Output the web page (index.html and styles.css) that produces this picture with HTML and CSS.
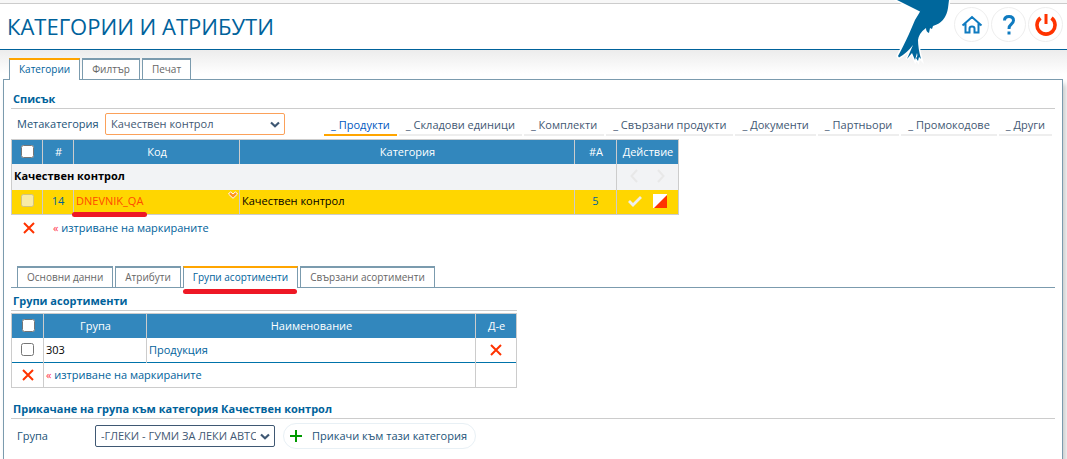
FILE: index.html
```html
<!DOCTYPE html>
<html lang="bg">
<head>
<meta charset="utf-8">
<title>Категории и атрибути</title>
<link rel="stylesheet" href="styles.css">
</head>
<body>
<svg class="defs" aria-hidden="true">
  <symbol id="cross" viewBox="0 0 12 12"><path d="M1 1L11 11M11 1L1 11" fill="none" stroke="#ff3300" stroke-width="2"/></symbol>
  <symbol id="chevron" viewBox="0 0 10 7"><path d="M1 1.5L5 5.2L9 1.5" fill="none" stroke="#3f5873" stroke-width="2.2"/></symbol>
</svg>
<header class="header">
  <h1 class="page-title">КАТЕГОРИИ И АТРИБУТИ</h1>
  <svg class="bird" viewBox="0 0 56 62" aria-hidden="true">
    <path d="M-6 -4L2 0L25 11.500L28 6Q25 12 20 20Q17 27 14 34Q8 47 3 56L4 57.500Q12 53 18 45L12 59L17 53L20 60L22 53Q23 57 21 58L23 61L24 57L26 59Q23 48 23 40Q24 33 31 28Q31 32 34 33L35 28L37 29L38 26Q51 22 53 8L54 0V-4Z" fill="#00679c" stroke="#fff" stroke-width="3" paint-order="stroke"/>
  </svg>
  <nav class="header-actions">
    <a class="round" href="#" aria-label="Начало"><svg width="22" height="22" viewBox="0 0 22 22"><path d="M1.500 11.500L11 3L20.500 11.500M4.500 9.500V18.500H8.500V14.500Q8.500 12.500 11 12.500Q13.500 12.500 13.500 14.500V18.500H17.500V9.500" fill="none" stroke="#0f7bc0" stroke-width="2"/></svg></a>
    <a class="round" href="#" aria-label="Помощ"><svg width="22" height="22" viewBox="0 0 22 22"><path d="M6.500 6.500Q6.500 2.500 11 2.500Q15.500 2.500 15.500 6.500Q15.500 8.500 13 10.500Q11 12 11 15" fill="none" stroke="#0f7bc0" stroke-width="3"/><path d="M9.500 17.500H12.500V20.500H9.500Z" fill="#0f7bc0"/></svg></a>
    <a class="round" href="#" aria-label="Изход"><svg width="22" height="22" viewBox="0 0 22 22"><path d="M5.500 4A9 9 0 1 0 16.500 4" fill="none" stroke="#ff3300" stroke-width="3.600"/><path d="M11 0V10" stroke="#ff3300" stroke-width="3"/></svg></a>
  </nav>
</header>
<main class="page">
  <nav class="tabs">
    <a class="tab active" href="#">Категории</a>
    <a class="tab" href="#">Филтър</a>
    <a class="tab" href="#">Печат</a>
  </nav>
  <div class="panel">
    <h2 class="section-title">Списък</h2>
    <div class="filter">
      <label class="filter-label" for="meta">Метакатегория</label>
      <span class="select-wrap">
        <select class="select highlighted" id="meta"><option>Качествен контрол</option></select>
        <svg class="arrow"><use href="#chevron"/></svg>
      </span>
      <nav class="kinds">
        <a class="kind active" href="#">_ Продукти</a>
        <a class="kind" href="#">_ Складови единици</a>
        <a class="kind" href="#">_ Комплекти</a>
        <a class="kind" href="#">_ Свързани продукти</a>
        <a class="kind" href="#">_ Документи</a>
        <a class="kind" href="#">_ Партньори</a>
        <a class="kind" href="#">_ Промокодове</a>
        <a class="kind" href="#">_ Други</a>
      </nav>
    </div>
    <table class="grid categories">
      <colgroup><col class="c-check"><col class="c-num"><col class="c-code"><col class="c-cat"><col class="c-attr"><col class="c-act"></colgroup>
      <thead>
        <tr><th><input class="check" type="checkbox" aria-label="Маркирай всички категории"></th><th>#</th><th>Код</th><th>Категория</th><th>#А</th><th>Действие</th></tr>
      </thead>
      <tbody>
        <tr class="group">
          <td colspan="5">Качествен контрол</td>
          <td class="center"><span class="icons">
            <svg width="8" height="14" viewBox="0 0 8 14"><path d="M7 1L1.500 7L7 13" fill="none" stroke="#e8e8e8" stroke-width="2"/></svg>
            <svg width="8" height="14" viewBox="0 0 8 14"><path d="M1 1L6.500 7L1 13" fill="none" stroke="#e8e8e8" stroke-width="2"/></svg>
          </span></td>
        </tr>
        <tr class="selected">
          <td class="center"><input class="check" type="checkbox" disabled aria-label="Маркирай DNEVNIK_QA"></td>
          <td class="center num">14</td>
          <td class="code"><a class="code-link marked" href="#">DNEVNIK_QA</a><svg class="sort-mark" width="10" height="8" viewBox="0 0 10 8"><path d="M0.500 3L2.500 0.800L5 3L7.500 0.800L9.500 3L5 7.300Z" fill="#ff9320" stroke="#fff"/></svg></td>
          <td>Качествен контрол</td>
          <td class="center num">5</td>
          <td class="center"><span class="icons tight">
            <svg width="14" height="12" viewBox="0 0 14 12"><path d="M1 6L5 10L13 2" fill="none" stroke="#eee" stroke-width="2.800"/></svg>
            <svg width="14" height="14" viewBox="0 0 14 14"><path d="M0 0H14V14H0Z" fill="#fff"/><path d="M14 1V14H1Z" fill="#ff3300"/></svg>
          </span></td>
        </tr>
      </tbody>
    </table>
    <div class="delete-row">
      <svg class="cross"><use href="#cross"/></svg>
      <a class="link" href="#"><span class="red">«</span> изтриване на маркираните</a>
    </div>
    <nav class="tabs inner">
      <a class="tab" href="#">Основни данни</a>
      <a class="tab" href="#">Атрибути</a>
      <a class="tab active marked" href="#">Групи асортименти</a>
      <a class="tab" href="#">Свързани асортименти</a>
    </nav>
    <section class="groups">
      <h2 class="section-title">Групи асортименти</h2>
      <table class="grid assortments">
        <colgroup><col class="g-check"><col class="g-group"><col class="g-name"><col class="g-act"></colgroup>
        <thead>
          <tr><th><input class="check" type="checkbox" aria-label="Маркирай всички групи"></th><th>Група</th><th>Наименование</th><th>Д-е</th></tr>
        </thead>
        <tbody>
          <tr class="item">
            <td class="center"><input class="check" type="checkbox" aria-label="Маркирай 303"></td>
            <td>303</td>
            <td><a class="link" href="#">Продукция</a></td>
            <td class="center"><svg class="cross"><use href="#cross"/></svg></td>
          </tr>
          <tr class="item">
            <td class="center"><svg class="cross"><use href="#cross"/></svg></td>
            <td colspan="2"><a class="link" href="#"><span class="red">«</span> изтриване на маркираните</a></td>
            <td></td>
          </tr>
        </tbody>
      </table>
    </section>
    <h2 class="section-title attach-title">Прикачане на група към категория Качествен контрол</h2>
    <div class="attach">
      <label class="attach-label" for="group">Група</label>
      <span class="select-wrap">
        <select class="select" id="group"><option>-ГЛЕКИ - ГУМИ ЗА ЛЕКИ АВТОМОБИЛИ</option></select>
        <svg class="arrow"><use href="#chevron"/></svg>
      </span>
      <button class="attach-button" type="button"><svg width="12" height="12" viewBox="0 0 12 12"><path d="M6 0V12M0 6H12" stroke="#009a00" stroke-width="2"/></svg>Прикачи към тази категория</button>
    </div>
  </div>
</main>
</body>
</html>
```
FILE: styles.css
```css
* { box-sizing: border-box; }
body {
  margin: 0;
  min-height: 100vh;
  display: flex;
  flex-direction: column;
  padding-top: 3px;
  font: 11px/16px "Open Sans", sans-serif;
  color: #000;
  background: #f7f7f7;
}
a { text-decoration: none; color: #005f94; }
.defs { position: absolute; width: 0; height: 0; }

.header {
  position: relative;
  display: flex;
  align-items: center;
  justify-content: space-between;
  height: 47px;
  padding: 0 4px 0 7px;
  border-top: 1px solid #ccc;
  border-bottom: 1px solid #00629b;
  background: #fff;
}
.page-title { margin: 0; font-size: 22px; line-height: 28px; padding-bottom: 2px; font-weight: 400; color: #00629b; }
.bird { position: absolute; top: -4px; right: 116px; width: 56px; height: 62px; z-index: 1; overflow: visible; }
.header-actions { display: flex; align-self: flex-start; gap: 2px; margin-top: 3px; }
.round {
  display: grid;
  place-items: center;
  width: 35px;
  height: 35px;
  border: 1px solid #eee;
  border-radius: 50%;
}

.page {
  flex: 1;
  display: flex;
  flex-direction: column;
  padding: 8px 4px 0 3px;
  background: linear-gradient(#ececec, #fff 24px);
}
.tabs { display: flex; gap: 2px; padding-left: 6px; }
.tab {
  position: relative;
  height: 21px;
  padding: 1px 9px 0;
  border: 1px solid #7b9bae;
  border-top-width: 2px;
  border-bottom: 0;
  background: #fff;
  color: #666;
  font-size: 10px;
}
.tab.active { border-top-color: #ffa500; color: #00629b; margin-bottom: -1px; height: 22px; z-index: 1; }
.panel {
  flex: 1;
  padding: 10px 7px 8px;
  border: 1px solid #7b9bae;
  border-bottom: 0;
  background: #fff;
  box-shadow: 3px 5px 5px #ccc;
}
.section-title {
  margin: 0;
  height: 19px;
  padding-left: 2px;
  border-bottom: 1px solid #ccc;
  font-size: 11px;
  line-height: 18px;
  font-weight: 700;
  color: #00629b;
}

.filter { display: flex; align-items: flex-start; height: 30px; padding-top: 4px; }
.filter-label { width: 94px; padding-left: 6px; line-height: 22px; color: #225378; }
.select-wrap { position: relative; display: block; width: 180px; }
.select {
  display: block;
  appearance: none;
  width: 100%;
  height: 22px;
  padding: 0 18px 0 5px;
  border: 1px solid #3f5873;
  border-radius: 2px;
  background: #fff;
  font: inherit;
  color: #3f5873;
}
.select.highlighted { border-color: #fba15a; }
.arrow { position: absolute; right: 5px; top: 8px; width: 10px; height: 7px; pointer-events: none; }
.kinds { flex: 1; display: flex; justify-content: flex-end; gap: 2px; padding-right: 3px; white-space: nowrap; }
.kind { height: 23px; padding: 0 7px; border-bottom: 2px solid #eee; line-height: 24px; color: #3f5873; }
.kind.active { border-color: #ffa500; color: #0058c0; }

.grid { border-collapse: collapse; table-layout: fixed; border: 1px solid #ccc; }
.grid th { height: 24px; padding: 0 0 0 1px; border: 1px solid #ccc; border-bottom: 0; background: #3287bd; color: #fff; font-weight: 500; }
.grid td { height: 25px; padding: 0 2px; border-left: 1px solid #ccc; border-right: 1px solid #ccc; }
.grid .center { text-align: center; padding: 0; }
.check { display: block; margin: 0 auto; width: 13px; height: 13px; }
.categories { width: 668px; }
.categories td, .categories .center { padding-bottom: 2px; }
.c-check { width: 31px; }
.c-num { width: 31px; }
.c-code { width: 166px; }
.c-cat { width: 335px; }
.c-attr { width: 42px; }
.c-act { width: 62px; }
.group { background: #f2f3f5; font-weight: 700; }
.grid .group td { height: 26px; }
.selected { background: #ffd600; }
.num { color: #00629b; }
.code { position: relative; }
.code-link { display: inline-block; position: relative; color: #ff4b00; }
.sort-mark { position: absolute; right: 1px; top: 1px; }
.icons { display: flex; justify-content: center; align-items: center; gap: 19px; }
.icons.tight { gap: 11px; }
.link { color: #00629b; }
.red { color: #ff3347; }
.cross { display: block; width: 12px; height: 12px; margin: 0 auto; }
.delete-row { display: flex; align-items: center; gap: 18px; height: 25px; padding-left: 12px; }
.delete-row .cross { margin: 0; }

.tabs.inner { margin-top: 26px; border-bottom: 1px solid #7b9bae; }
.marked::after {
  content: "";
  position: absolute;
  left: -1px;
  right: 0;
  bottom: -6px;
  height: 5px;
  border-radius: 3px;
  background: #ee1825;
}
.code-link.marked::after { left: -4px; right: -4px; bottom: -8px; }
.groups { width: 506px; padding-top: 4px; }
.groups .grid { width: 506px; margin-top: 2px; }
.g-check { width: 32px; }
.g-group { width: 103px; }
.g-name { width: 329px; }
.g-act { width: 41px; }
.item + .item { border-top: 1px solid #0073aa; }
.attach-title { margin-top: 12px; }
.attach { display: flex; align-items: center; padding-top: 4px; }
.attach-label { width: 84px; padding-left: 6px; color: #225378; }
.attach-button {
  display: flex;
  align-items: center;
  gap: 10px;
  height: 26px;
  margin-left: 8px;
  padding: 0 8px 0 6px;
  border: 1px solid #e8f0f5;
  border-radius: 13px;
  background: #fff;
  font: inherit;
  color: #225378;
}
```
